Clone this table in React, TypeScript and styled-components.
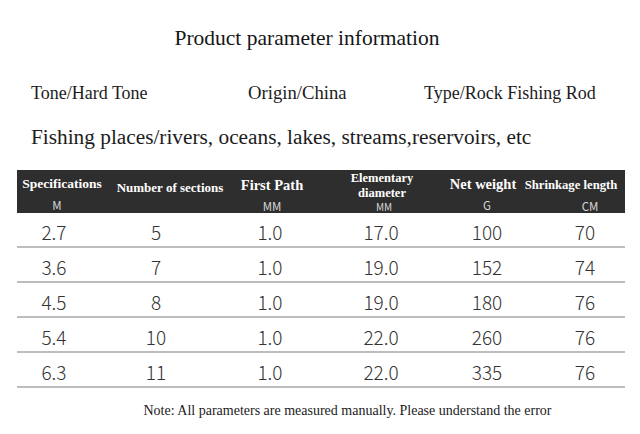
import React from 'react';
import styled, { createGlobalStyle } from 'styled-components';

const GlobalStyle = createGlobalStyle`
  html, body {
    margin: 0;
    padding: 0;
    background: #ffffff;
  }
`;

const serif = `"Liberation Serif", "Times New Roman", serif`;
const sans = `"Noto Sans CJK SC", "Noto Sans", sans-serif`;

const Page = styled.div`
  width: 640px;
  height: 434px;
  overflow: hidden;
  background: #fff;
  color: #1c1c1c;
  font-family: ${serif};
`;

const Title = styled.h1`
  margin: 24px 0 0;
  padding-right: 26px;
  font-family: ${serif};
  font-size: 21.5px;
  font-weight: 400;
  line-height: 28px;
  text-align: center;
  color: #161616;
`;

const InfoRow = styled.div`
  display: grid;
  grid-template-columns: 217px 176px auto;
  margin-top: 29px;
  padding-left: 31px;
  font-family: ${serif};
  font-size: 18px;
  line-height: 24px;
  white-space: nowrap;
`;

const Origin = styled.span`
  font-size: 18.7px;
`;

const Places = styled.div`
  margin-top: 18px;
  padding-left: 31px;
  font-family: ${serif};
  font-size: 21.3px;
  line-height: 28px;
  white-space: nowrap;
`;

const Table = styled.div`
  width: 608px;
  margin: 19px 0 0 17px;
`;

const HeadRow = styled.div`
  display: grid;
  grid-template-columns: 90px 126px 78px 142px 60px 116px;
  height: 43px;
  background: #2f2e2e;
  color: #fff;
  font-family: ${serif};
`;

const HeadCell = styled.div<{ $top: number }>`
  display: flex;
  flex-direction: column;
  align-items: center;
  padding-top: ${({ $top }) => $top}px;
  white-space: nowrap;
`;

const Label = styled.span<{ $size: number; $lh: number }>`
  font-size: ${({ $size }) => $size}px;
  line-height: ${({ $lh }) => $lh}px;
  font-weight: 700;
  text-align: center;
`;

const Unit = styled.span<{ $shift: number; $size: number }>`
  margin-top: ${({ $size }) => ($size < 11 ? 0 : 5)}px;
  margin-left: ${({ $shift }) => $shift * 2}px;
  font-family: ${sans};
  font-size: ${({ $size }) => $size}px;
  line-height: ${({ $size }) => ($size < 11 ? 12 : 14)}px;
  color: #d6d6d6;
`;

const BodyRow = styled.div`
  display: grid;
  grid-template-columns: 74px 130px 98px 124px 88px 108px;
  height: 33px;
  border-bottom: 2px solid #bdbdbd;
`;

const Cell = styled.div`
  display: flex;
  align-items: center;
  justify-content: center;
  padding-top: 3px;
  font-family: ${sans};
  font-size: 19px;
  font-weight: 300;
  color: #333;
`;

const Note = styled.div`
  margin-top: 13px;
  padding-left: 55px;
  font-family: ${serif};
  font-size: 14px;
  line-height: 20px;
  text-align: center;
  white-space: nowrap;
  color: #1a1a1a;
`;

type Head = {
  lines: string[];
  unit?: string;
  size: number;
  lh: number;
  top: number;
  unitSize?: number;
  shift?: number;
};

const heads: Head[] = [
  { lines: ['Specifications'], unit: 'M', size: 13.5, lh: 18, top: 5, shift: -5 },
  { lines: ['Number of sections'], size: 13, lh: 18, top: 9 },
  { lines: ['First Path'], unit: 'MM', size: 14.5, lh: 18, top: 6 },
  { lines: ['Elementary', 'diameter'], unit: 'MM', size: 12.5, lh: 15, top: 1, unitSize: 10, shift: 2 },
  { lines: ['Net weight'], unit: 'G', size: 14.5, lh: 18, top: 5, shift: 4 },
  { lines: ['Shrinkage length'], unit: 'CM', size: 12.7, lh: 18, top: 6, shift: 19 },
];

const rows = [
  ['2.7', '5', '1.0', '17.0', '100', '70'],
  ['3.6', '7', '1.0', '19.0', '152', '74'],
  ['4.5', '8', '1.0', '19.0', '180', '76'],
  ['5.4', '10', '1.0', '22.0', '260', '76'],
  ['6.3', '11', '1.0', '22.0', '335', '76'],
];

const App: React.FC = () => {
  return (
    <Page>
      <GlobalStyle />
      <Title>Product parameter information</Title>
      <InfoRow>
        <span>Tone/Hard Tone</span>
        <Origin>Origin/China</Origin>
        <span>Type/Rock Fishing Rod</span>
      </InfoRow>
      <Places>Fishing places/rivers, oceans, lakes, streams,reservoirs, etc</Places>

      <Table>
        <HeadRow>
          {heads.map((h) => (
            <HeadCell key={h.lines[0]} $top={h.top}>
              {h.lines.map((l) => (
                <Label key={l} $size={h.size} $lh={h.lh}>
                  {l}
                </Label>
              ))}
              {h.unit && (
                <Unit $shift={h.shift ?? 0} $size={h.unitSize ?? 11.5}>
                  {h.unit}
                </Unit>
              )}
            </HeadCell>
          ))}
        </HeadRow>
        {rows.map((r) => (
          <BodyRow key={r[0]}>
            {r.map((v, i) => (
              <Cell key={i}>{v}</Cell>
            ))}
          </BodyRow>
        ))}
      </Table>

      <Note>Note: All parameters are measured manually. Please understand the error</Note>
    </Page>
  );
};

export default App;
